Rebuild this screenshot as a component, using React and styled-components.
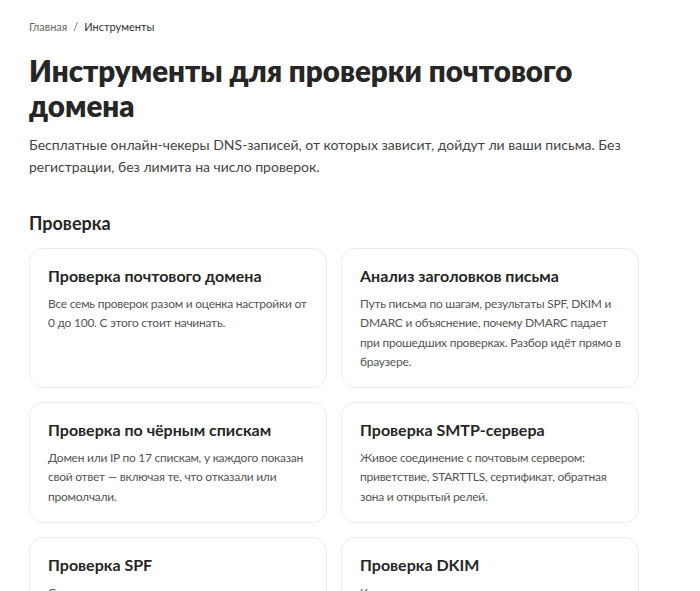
import styled, { createGlobalStyle } from "styled-components";

const GlobalStyle = createGlobalStyle`
  * {
    box-sizing: border-box;
  }
  body {
    margin: 0;
    background: #ffffff;
    font-family: Lato, "Noto Sans", sans-serif;
    color: #222222;
  }
`;

const Page = styled.main`
  width: 700px;
  padding: 19px 61px 0 29px;
`;

const Crumbs = styled.nav`
  display: flex;
  align-items: center;
  gap: 6px;
  font-size: 11px;
  line-height: 16px;
  color: #555555;
`;

const Crumb = styled.span`
  color: ${(props) => (props.current ? "#333333" : "#666666")};
`;

const Title = styled.h1`
  margin: 18px 0 0;
  font-size: 29.5px;
  line-height: 35px;
  font-weight: 800;
  color: #262626;
`;

const Lead = styled.p`
  margin: 11px 0 0;
  font-size: 14px;
  line-height: 22px;
  color: #444444;
`;

const SectionTitle = styled.h2`
  margin: 33px 0 0;
  font-size: 18px;
  line-height: 24px;
  font-weight: 700;
  color: #262626;
`;

const Grid = styled.div`
  margin-top: 13px;
  display: grid;
  grid-template-columns: 1fr 1fr;
  gap: 14px;
`;

const Card = styled.a`
  display: block;
  padding: 16px 15px 16px 18px;
  border: 1px solid #ececec;
  border-radius: 14px;
  background: #ffffff;
  text-decoration: none;
`;

const CardTitle = styled.h3`
  margin: 0;
  font-size: 16px;
  line-height: 22px;
  font-weight: 700;
  color: #262626;
`;

const CardText = styled.p`
  margin: 7px 0 0;
  font-size: 12px;
  line-height: 19.3px;
  letter-spacing: -0.25px;
  color: #555555;
`;

const tools = [
  {
    title: "Проверка почтового домена",
    text: "Все семь проверок разом и оценка настройки от 0 до 100. С этого стоит начинать.",
  },
  {
    title: "Анализ заголовков письма",
    text: "Путь письма по шагам, результаты SPF, DKIM и DMARC и объяснение, почему DMARC падает при прошедших проверках. Разбор идёт прямо в браузере.",
  },
  {
    title: "Проверка по чёрным спискам",
    text: "Домен или IP по 17 спискам, у каждого показан свой ответ — включая те, что отказали или промолчали.",
  },
  {
    title: "Проверка SMTP-сервера",
    text: "Живое соединение с почтовым сервером: приветствие, STARTTLS, сертификат, обратная зона и открытый релей.",
  },
  {
    title: "Проверка SPF",
    text: "Синтаксис записи, лимит в десять запросов, include и all.",
  },
  {
    title: "Проверка DKIM",
    text: "Ключ по селектору, его длина, алгоритм и ошибки в публичной записи.",
  },
];

export default function App() {
  return (
    <>
      <GlobalStyle />
      <Page>
        <Crumbs>
          <Crumb>Главная</Crumb>
          <Crumb>/</Crumb>
          <Crumb current>Инструменты</Crumb>
        </Crumbs>
        <Title>Инструменты для проверки почтового домена</Title>
        <Lead>
          Бесплатные онлайн-чекеры DNS-записей, от которых зависит, дойдут ли
          ваши письма. Без регистрации, без лимита на число проверок.
        </Lead>
        <SectionTitle>Проверка</SectionTitle>
        <Grid>
          {tools.map((tool) => (
            <Card key={tool.title} href="#">
              <CardTitle>{tool.title}</CardTitle>
              <CardText>{tool.text}</CardText>
            </Card>
          ))}
        </Grid>
      </Page>
    </>
  );
}
